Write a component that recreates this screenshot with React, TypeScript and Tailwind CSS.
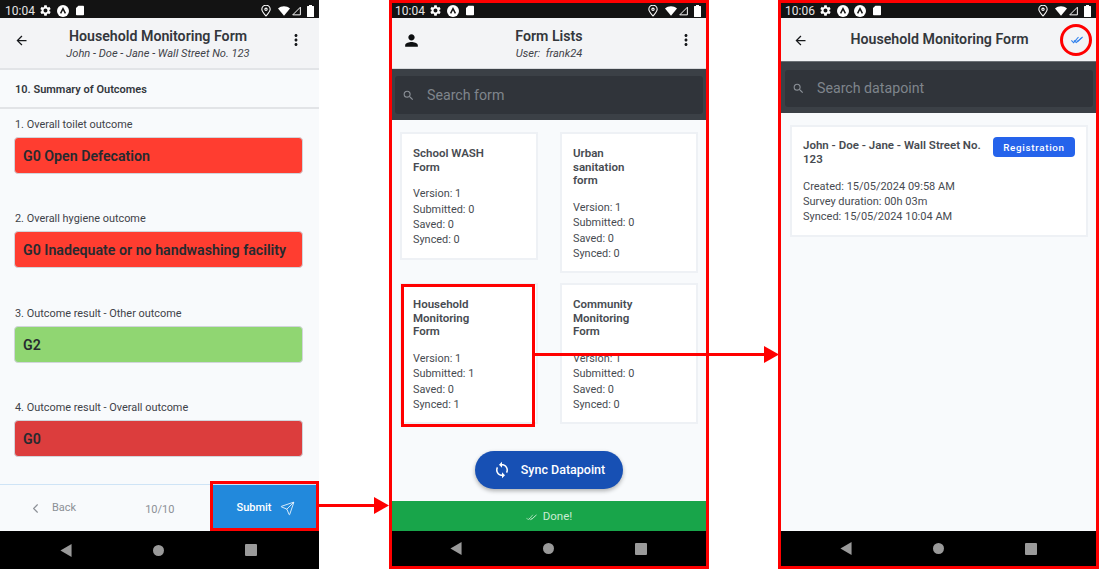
import { ChevronLeft, Send } from "lucide-react";
import { MdArrowBack, MdMoreVert, MdPerson, MdSearch, MdSettings, MdSync } from "react-icons/md";

function AppBadge() {
  return (
    <span className="flex h-[12px] w-[12px] items-center justify-center rounded-full bg-white">
      <svg viewBox="0 0 10 10" className="h-[8px] w-[8px]" fill="none" stroke="#111" strokeWidth="1.8">
        <path d="M2 8 L5 2 L8 8" />
      </svg>
    </span>
  );
}

function StatusBar({ time, apps = 1, pad }: { time: string; apps?: number; pad: string }) {
  return (
    <div className={`flex h-[15px] shrink-0 items-center bg-[#131313] pr-[5px] text-[12px] text-[#e5e5e5] ${pad}`}>
      <span className="w-[28px]">{time}</span>
      <div className="ml-[6px] flex items-center gap-[5px]">
        <MdSettings className="h-[13px] w-[13px] text-white" />
        {Array.from({ length: apps }).map((_, i) => (
          <AppBadge key={i} />
        ))}
        <svg viewBox="0 0 10 12" className="ml-[2px] h-[11px] w-[8px]" fill="#fff">
          <path d="M3 0h6a1 1 0 0 1 1 1v10a1 1 0 0 1-1 1H1a1 1 0 0 1-1-1V3z" />
        </svg>
      </div>
      <div className="ml-auto flex items-center gap-[2px]">
        <svg viewBox="0 0 12 14" className="mr-[5px] h-[12px] w-[10px]" fill="none" stroke="#fff" strokeWidth="1.3">
          <path d="M6 13 C3 9.5 1 7.5 1 5 a5 5 0 0 1 10 0 C11 7.5 9 9.5 6 13z" />
          <circle cx="6" cy="5" r="1.4" />
        </svg>
        <svg viewBox="0 0 14 11" className="h-[10px] w-[12px]" fill="#fff">
          <path d="M0 2.5 C4 -0.8 10 -0.8 14 2.5 L7 11z" />
        </svg>
        <svg viewBox="0 0 10 10" className="h-[10px] w-[9px]" fill="none" stroke="#fff" strokeWidth="1.1">
          <path d="M9.3 0.8 V9.3 H0.8z" />
        </svg>
        <svg viewBox="0 0 7 12" className="ml-[4px] h-[12px] w-[7px]" fill="#fff">
          <path d="M2 0h3v1h1.5a.5.5 0 0 1 .5.5V11.500a.5.5 0 0 1-.5.5H.5a.5.5 0 0 1-.5-.5V1.500A.5.5 0 0 1 .5 1H2z" />
        </svg>
      </div>
    </div>
  );
}

function NavBar({ shift }: { shift: string }) {
  return (
    <div className={`flex shrink-0 items-center bg-black ${shift}`}>
      <svg viewBox="0 0 12 14" className="h-[13px] w-[12px]" fill="#9a9a9a">
        <path d="M12 0 V14 L0 7z" />
      </svg>
      <span className="ml-[81px] h-[11px] w-[11px] rounded-full bg-[#9a9a9a]" />
      <span className="ml-[81px] h-[12px] w-[12px] rounded-[1px] bg-[#9a9a9a]" />
    </div>
  );
}

function Outcome({ label, value, color, gap }: { label: string; value: string; color: string; gap: string }) {
  return (
    <div className={gap}>
      <p className="pl-[1px] pt-[1px] text-[10.9px] leading-[14px] text-[#3f4349]">{label}</p>
      <div className={`mt-[5px] flex h-[37px] items-center rounded-[4px] border border-[#d1d5db] pl-[8px] pt-[2px] text-[14.2px] font-semibold text-[#262a2f] ${color}`}>
        {value}
      </div>
    </div>
  );
}

function FormCard({ title, submitted, synced = 0, size }: { title: string[]; submitted: number; synced?: number; size: string }) {
  return (
    <div className={`w-[138px] border-2 border-[#eef1f5] bg-white pl-[11px] pt-[13px] ${size}`}>
      <div className="text-[11.5px] font-semibold leading-[13.7px] text-[#474b51]">
        {title.map((line) => (
          <div key={line}>{line}</div>
        ))}
      </div>
      <div className="mt-[12px] text-[10.9px] leading-[15.2px] text-[#474b51]">
        <div>Version: 1</div>
        <div>Submitted: {submitted}</div>
        <div>Saved: 0</div>
        <div>Synced: {synced}</div>
      </div>
    </div>
  );
}

function SearchBox({ text, band, box }: { text: string; band: string; box: string }) {
  return (
    <div className={`flex shrink-0 items-center bg-[#3b4046] pr-[3px] ${band}`}>
      <div className={`flex w-full items-center rounded-[3px] bg-[#30343a] pl-[7px] ${box}`}>
        <MdSearch className="h-[13px] w-[13px] text-[#8b9097]" />
        <span className="ml-[12px] mt-[1px] text-[14.2px] text-[#7f858c]">{text}</span>
      </div>
    </div>
  );
}

function DoubleCheck({ className, stroke, width = 1 }: { className: string; stroke: string; width?: number }) {
  return (
    <svg viewBox="0 0 16 10" className={className} fill="none" stroke={stroke} strokeWidth={width}>
      <path d="M0.5 5.5 L3.5 8.5 L10 1" />
      <path d="M4 5.5 L7 8.5 L15.5 1" />
      <path d="M7.5 5.8 L9 7 L14 2" />
    </svg>
  );
}

function TitleBlock({ title, sub }: { title: string; sub: string }) {
  return (
    <div className="mt-[4px] flex-1 text-center">
      <div className="text-[14.2px] font-semibold leading-[18px] text-[#33373c]">{title}</div>
      <div className="text-[11.1px] italic leading-[18px] text-[#3f4349]">{sub}</div>
    </div>
  );
}

function ScreenOne() {
  return (
    <div className="flex h-[569px] w-[319px] shrink-0 flex-col bg-[#f8fafc]">
      <div className="h-[3px] shrink-0 bg-[#131313]" />
      <StatusBar time="10:04" pad="pl-[5px]" />
      <header className="flex h-[52px] shrink-0 items-center border-b-2 border-[#e2e4e7] bg-[#f3f4f6] pl-[14px] pr-[14px]">
        <MdArrowBack className="mb-[6px] h-[15px] w-[15px] text-[#16181b]" />
        <TitleBlock title="Household Monitoring Form" sub="John - Doe - Jane - Wall Street No. 123" />
        <MdMoreVert className="mb-[6px] h-[18px] w-[18px] text-[#16181b]" />
      </header>
      <div className="flex h-[39px] shrink-0 items-center border-b-2 border-[#e2e4e7] pl-[15px] pt-[3px] text-[11px] font-semibold text-[#33373c]">
        10. Summary of Outcomes
      </div>
      <div className="flex-1 pl-[14px] pr-[16px]">
        <Outcome label="1. Overall toilet outcome" value="G0 Open Defecation" color="bg-[#ff3d30]" gap="mt-[8px]" />
        <Outcome label="2. Overall hygiene outcome" value="G0 Inadequate or no handwashing facility" color="bg-[#ff3d30]" gap="mt-[37px]" />
        <Outcome label="3. Outcome result - Other outcome" value="G2" color="bg-[#90d672]" gap="mt-[38px]" />
        <Outcome label="4. Outcome result - Overall outcome" value="G0" color="bg-[#dc3d3d]" gap="mt-[37px]" />
      </div>
      <div className="flex h-[47px] shrink-0 items-stretch border-t border-[#cfe4f6]">
        <div className="flex w-[212px] items-center pl-[28px] text-[#8c9096]">
          <ChevronLeft className="h-[15px] w-[15px]" strokeWidth={1.8} />
          <span className="ml-[9px] text-[11px]">Back</span>
          <span className="ml-[69px] mt-[4px] text-[11px]">10/10</span>
        </div>
        <div className="flex flex-1 items-center justify-center gap-[8px] bg-[#2289dc] text-[11px] font-medium text-white">
          Submit
          <Send className="h-[15px] w-[15px]" strokeWidth={1.3} />
        </div>
      </div>
      <NavBar shift="h-[38px] pl-[60px]" />
    </div>
  );
}

function ScreenTwo() {
  return (
    <div className="ml-[70px] flex h-[569px] w-[320px] shrink-0 flex-col border-[3px] border-[#ff0000] bg-[#f8fafc]">
      <StatusBar time="10:04" pad="pl-[3px]" />
      <header className="flex h-[51px] shrink-0 items-center border-b border-[#d7d9dc] bg-[#f3f4f6] pl-[10px] pr-[11px]">
        <MdPerson className="mb-[6px] h-[19px] w-[19px] text-[#0d0f11]" />
        <TitleBlock title="Form Lists" sub={"User:\u00a0 frank24"} />
        <MdMoreVert className="mb-[6px] h-[18px] w-[18px] text-[#16181b]" />
      </header>
      <SearchBox text="Search form" band="h-[51px] pl-[3px] pt-[1px]" box="h-[38px]" />
      <div className="flex flex-1 flex-col">
        <div className="flex items-start gap-[22px] pl-[8px] pt-[12px]">
          <FormCard title={["School WASH", "Form"]} submitted={0} size="h-[128px]" />
          <FormCard title={["Urban", "sanitation", "form"]} submitted={0} size="h-[141px]" />
        </div>
        <div className="mt-[10px] flex items-start gap-[22px] pl-[8px]">
          <FormCard title={["Household", "Monitoring", "Form"]} submitted={1} synced={1} size="h-[141px]" />
          <FormCard title={["Community", "Monitoring", "Form"]} submitted={0} size="h-[141px]" />
        </div>
        <div className="mt-[27px] flex justify-center">
          <div className="flex h-[38px] w-[148px] items-center justify-center gap-[10px] rounded-full bg-[#1750b4] text-[12.5px] font-medium text-white shadow-[0_2px_4px_rgba(0,0,0,0.3)]">
            <MdSync className="h-[18px] w-[18px]" />
            Sync Datapoint
          </div>
        </div>
      </div>
      <div className="flex h-[30px] shrink-0 items-center justify-center gap-[6px] bg-[#18a54a] pt-[2px] text-[11.5px] text-[#c9ecd3]">
        <DoubleCheck className="h-[7px] w-[11px]" stroke="#c9ecd3" />
        Done!
      </div>
      <NavBar shift="h-[35px] pl-[58px]" />
    </div>
  );
}

function ScreenThree() {
  return (
    <div className="ml-[69px] flex h-[569px] w-[321px] shrink-0 flex-col border-[3px] border-[#ff0000] bg-[#f8fafc]">
      <StatusBar time="10:06" apps={2} pad="pl-[4px]" />
      <header className="flex h-[44px] shrink-0 items-center border-b border-[#6b7075] bg-[#f3f4f6] pl-[12px] pr-[13px] pt-[1px]">
        <MdArrowBack className="h-[15px] w-[15px] text-[#16181b]" />
        <div className="flex-1 text-center text-[14.2px] font-semibold text-[#33373c]">Household Monitoring Form</div>
        <DoubleCheck className="h-[8px] w-[12px]" stroke="#2f80ed" width={1.4} />
      </header>
      <SearchBox text="Search datapoint" band="h-[51px] pl-[4px] pt-[2px]" box="h-[37px]" />
      <div className="flex-1 px-[9px] pt-[12px]">
        <div className="h-[112px] w-[298px] border-2 border-[#eef1f5] bg-white pl-[11px] pr-[11px] pt-[11px]">
          <div className="flex items-start">
            <div className="w-[185px] text-[11.5px] font-semibold leading-[14px] text-[#474b51]">John - Doe - Jane - Wall Street No. 123</div>
            <div className="ml-[5px] -mt-[1px] flex h-[20px] w-[82px] items-center justify-center rounded-[4px] bg-[#2563eb] pt-[2px] text-[9.8px] font-medium tracking-[0.7px] text-white">
              Registration
            </div>
          </div>
          <div className="mt-[13px] text-[11px] leading-[15.2px] text-[#474b51]">
            <div>Created: 15/05/2024 09:58 AM</div>
            <div>Survey duration: 00h 03m</div>
            <div>Synced: 15/05/2024 10:04 AM</div>
          </div>
        </div>
      </div>
      <NavBar shift="h-[35px] pl-[59px]" />
    </div>
  );
}

export default function App() {
  return (
    <div className="relative flex h-[569px] w-[1099px] overflow-hidden bg-white font-['Roboto',sans-serif]">
      <ScreenOne />
      <ScreenTwo />
      <ScreenThree />

      {/* red callouts drawn over the screenshots */}
      <div className="absolute left-[210px] top-[481px] h-[50px] w-[109px] border-[3px] border-[#ff0000]" />
      <div className="absolute left-[319px] top-[504px] h-[3px] w-[58px] bg-[#ff0000]" />
      <svg viewBox="0 0 16 18" className="absolute left-[374px] top-[497px] h-[17px] w-[15px]" fill="#ff0000">
        <path d="M0 0 L16 9 L0 18z" />
      </svg>
      <div className="absolute left-[401px] top-[284px] h-[143px] w-[134px] border-[3px] border-[#ff0000]" />
      <div className="absolute left-[535px] top-[353px] h-[3px] w-[230px] bg-[#ff0000]" />
      <svg viewBox="0 0 16 18" className="absolute left-[764px] top-[346px] h-[17px] w-[15px]" fill="#ff0000">
        <path d="M0 0 L16 9 L0 18z" />
      </svg>
      <div className="absolute left-[1060px] top-[24px] h-[32px] w-[32px] rounded-full border-[3px] border-[#ff0000]" />
    </div>
  );
}
